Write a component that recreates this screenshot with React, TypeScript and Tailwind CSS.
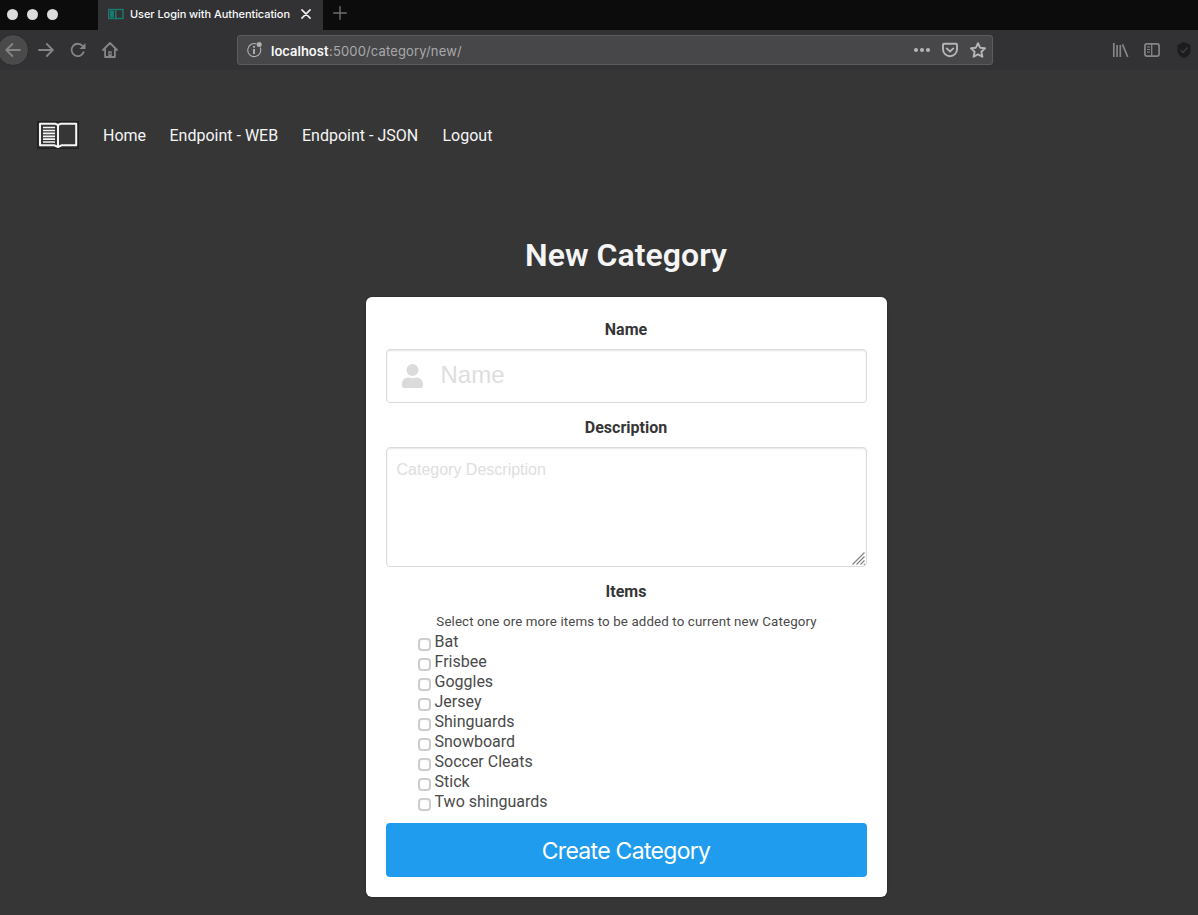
import React from "react";

const items = ["Bat", "Frisbee", "Goggles", "Jersey", "Shinguards", "Snowboard", "Soccer Cleats", "Stick", "Two shinguards"];

function TabStrip() {
  return (
    <div className="flex h-[30px] bg-[#0c0c0d]">
      <div className="flex w-[98px] items-start gap-[9px] pl-[6.5px] pt-[8.5px]">
        <span className="size-[11px] rounded-full bg-[#dcdcdc]" />
        <span className="size-[11px] rounded-full bg-[#dcdcdc]" />
        <span className="size-[11px] rounded-full bg-[#dcdcdc]" />
      </div>
      <div className="flex w-[225px] items-center bg-[#323234] pb-[2px] pl-[10px]">
        <svg width="16" height="12" viewBox="0 0 16 12" fill="none">
          <rect x="0.7" y="1.5" width="14.3" height="9" stroke="#187a6f" strokeWidth="1.4" />
          <path d="M2 2.5h4v7H2z" fill="#1f786e" />
          <path d="M7.8 1v10.500" stroke="#187a6f" strokeWidth="1.5" />
        </svg>
        <span className="ml-[6px] w-[160px] whitespace-nowrap text-[11px] font-medium tracking-[-0.06px] text-[#f9f9fa]">
          User Login with Authentication
        </span>
        <svg className="ml-[11px]" width="10" height="10" viewBox="0 0 10 10" stroke="#f2f2f3" strokeWidth="1.5" strokeLinecap="round">
          <path d="M.9.9l8.2 8.2M9.1.9L.9 9.1" />
        </svg>
      </div>
      <svg className="ml-[10px] mt-[6px]" width="14" height="14" viewBox="0 0 14 14" stroke="#6e6e6f" strokeWidth="1.4" strokeLinecap="round">
        <path d="M7 .7v12.6M.7 7h12.6" />
      </svg>
    </div>
  );
}

function Toolbar() {
  return (
    <div className="flex h-10 items-center bg-[#323234]">
      <div className="-ml-[3px] flex size-8 shrink-0 items-center justify-center rounded-full border border-[#2a2a2c] bg-[#4a4a4b]">
        <svg width="16" height="16" viewBox="0 0 16 16" fill="none" stroke="#848485" strokeWidth="1.8" strokeLinecap="round" strokeLinejoin="round">
          <path d="M15 8H1.5M7.4 2L1.3 8l6.1 6" />
        </svg>
      </div>
      <svg className="ml-[9px] shrink-0" width="16" height="16" viewBox="0 0 16 16" fill="none" stroke="#858587" strokeWidth="1.8" strokeLinecap="round" strokeLinejoin="round">
        <path d="M1 8h13.5M8.8 2l6 6-6 6" />
      </svg>
      <svg className="ml-4 shrink-0" width="16" height="16" viewBox="0 0 16 16" fill="none" stroke="#858587" strokeWidth="1.8" strokeLinecap="round">
        <path d="M13.6 10.2A6.2 6.2 0 1 1 12.6 4" />
        <path d="M15.5 1v6h-6z" fill="#858587" stroke="none" />
      </svg>
      <svg className="ml-4 shrink-0" width="16" height="16" viewBox="0 0 16 16" fill="none" stroke="#858587" strokeWidth="1.8" strokeLinecap="round" strokeLinejoin="round">
        <path d="M1 8l7-7 7 7M3.1 7v8h9.8V7" />
        <path d="M6.3 15V9.2h3.4V15z" fill="#858587" stroke="none" />
        <path d="M8.2 11.3v.4" stroke="#323234" strokeWidth="1.3" />
      </svg>
      <div className="ml-[119px] flex h-[30px] w-[756px] shrink-0 items-center rounded-[3px] border border-[#5c5c5e] bg-[#474749] pl-[8px] pr-[6px]">
        <svg width="17" height="18" viewBox="0 0 17 18" fill="none" stroke="#b1b1b3" strokeWidth="1.1">
          <path d="M14.2 6.5A6.5 6.5 0 1 1 10.5 3" />
          <path d="M8 8v5" strokeWidth="1.9" />
          <circle cx="8" cy="5.8" r="1.1" fill="#b1b1b3" stroke="none" />
          <circle cx="13.2" cy="3.5" r="2.5" fill="#b1b1b3" stroke="none" />
        </svg>
        <span className="ml-[8px] flex whitespace-nowrap pt-[2px] text-[13px] leading-[18px] text-[#a9a9ab]">
          <span className="w-[58px] font-semibold tracking-[0px] text-[#f9f9fa]">localhost</span>
          <span className="tracking-[0.15px]">:5000/category/new/</span>
        </span>
        <svg className="ml-auto" width="16" height="16" viewBox="0 0 16 16" fill="#b5b5b7">
          <circle cx="2" cy="8" r="2" /><circle cx="8" cy="8" r="2" /><circle cx="14" cy="8" r="2" />
        </svg>
        <svg className="ml-3" width="16" height="16" viewBox="0 0 16 16" fill="none" stroke="#b5b5b7" strokeWidth="1.9" strokeLinecap="round" strokeLinejoin="round">
          <path d="M2 1.7h12a1 1 0 0 1 1 1v4.5a7 7 0 0 1-14 0V2.7a1 1 0 0 1 1-1z" />
          <path d="M4.7 6.4L8 9.5l3.3-3.1" />
        </svg>
        <svg className="ml-3" width="16" height="16" viewBox="0 0 16 16" fill="none" stroke="#b5b5b7" strokeWidth="1.9" strokeLinejoin="round">
          <path d="M8 1.2l2.1 4.5 4.9.6-3.6 3.4 1 5L8 12.3l-4.4 2.4 1-5L1 6.300l4.900-.6z" />
        </svg>
      </div>
      <svg className="ml-[119px] shrink-0" width="17" height="16" viewBox="0 0 17 16" fill="none" stroke="#858587" strokeWidth="1.7">
        <path d="M1.8 1v14M5.1 3v12M8.3 3v12M10.5 2.300l5.200 12.500" />
      </svg>
      <svg className="ml-[15px] shrink-0" width="16" height="16" viewBox="0 0 16 16" fill="none" stroke="#858587" strokeWidth="1.7">
        <rect x=".9" y="1.9" width="14.2" height="12.2" rx="2" />
        <path d="M7.7 2v12" strokeWidth="1.3" />
        <path d="M3 5h3M3 7.5h3M3 10h3" strokeWidth="1.2" />
      </svg>
      <svg className="ml-4 shrink-0" width="16" height="16" viewBox="0 0 16 16" fill="none">
        <path d="M8 0l6.5 3v6c0 3.200-3 5.500-6.500 7-3.500-1.500-6.500-3.800-6.500-7V3z" fill="#1c1c1d" />
        <path d="M4.800 8.200l2.200 2.200 4.500-4.800" stroke="#3e3e40" strokeWidth="1.400" />
      </svg>
    </div>
  );
}

function SiteNav() {
  return (
    <nav className="flex h-[28px] items-center pl-[37px] text-[16px] leading-6 text-[#f5f5f5]">
      <svg className="mr-[24px] shrink-0" width="42" height="28" viewBox="0 0 42 28" fill="none">
        <rect x=".5" y=".5" width="41" height="27" fill="#2c2c2c" stroke="#202020" />
        <path d="M3 2.800h15.500l2.500 1.200 2.500-1.200H39.200v21.500H24.500L21 26l-3.500-1.700H3z" fill="#363636" stroke="#f5f5f5" strokeWidth="2" strokeLinejoin="round" />
        <path d="M21 3.500v22" stroke="#f5f5f5" strokeWidth="2" />
        <path d="M6 6.500h12M6 9.500h12M6 12.400h12M6 15.300h12M6 18.200h12M6 21h12" stroke="#f5f5f5" strokeWidth="1.700" />
      </svg>
      <a className="w-[66.5px] whitespace-nowrap pt-[2px]">Home</a>
      <a className="w-[132.5px] whitespace-nowrap pt-[2px]">Endpoint - WEB</a>
      <a className="w-[140.5px] whitespace-nowrap pt-[2px]">Endpoint - JSON</a>
      <a className="pt-[2px]">Logout</a>
    </nav>
  );
}

export default function App() {
  return (
    <div className="flex h-[915px] w-[1198px] flex-col overflow-hidden bg-[#363636] font-['Inter',sans-serif]">
      <TabStrip />
      <Toolbar />
      <main className="flex flex-col pt-[51px] font-['Roboto',sans-serif]">
        <SiteNav />
        <div className="ml-[366px] w-[521px] pt-[88px]">
          <h1 className="pr-px text-center text-[32px] font-semibold leading-9 tracking-[0.05px] text-[#f5f5f5]">New Category</h1>
          <form className="mt-6 flex h-[600px] flex-col rounded-[6px] bg-white px-5 pt-5 text-[#4a4a4a] shadow-[0_2px_3px_rgba(10,10,10,0.1),0_0_0_1px_rgba(10,10,10,0.1)]">
            <label className="h-6 pr-px pt-px text-center text-[16px] font-bold leading-6 text-[#363636]">Name</label>
            <div className="mt-2 flex h-[54px] items-center rounded-[4px] border border-[#dbdbdb] pl-[15px] shadow-[inset_0_1px_2px_rgba(10,10,10,0.1)]">
              <svg width="21" height="24" viewBox="0 0 21 24" fill="#dbdbdb">
                <circle cx="10.5" cy="6" r="6" />
                <path d="M6.3 13.5h.8c2.1 1 4.700 1 6.800 0h.8c3.500 0 6.300 2.800 6.300 6.300v1.900c0 1.300-1 2.300-2.300 2.300H2.300C1 24 0 23 0 21.700v-1.900c0-3.500 2.800-6.300 6.300-6.300z" />
              </svg>
              <input className="ml-[17.5px] w-[400px] bg-transparent pb-[3px] font-['Liberation_Sans',sans-serif] text-[24px] leading-9 outline-none placeholder:text-[#dedede]" placeholder="Name" />
            </div>
            <label className="mt-3 h-6 pr-px pt-px text-center text-[16px] font-bold leading-6 text-[#363636]">Description</label>
            <div className="relative mt-2 h-[120px] shrink-0">
              <textarea
                className="block size-full resize-none rounded-[4px] border border-[#dbdbdb] px-[9.5px] py-[10px] font-['Liberation_Sans',sans-serif] text-[16px] leading-6 shadow-[inset_0_1px_2px_rgba(10,10,10,0.1)] outline-none placeholder:text-[#dedede]"
                placeholder="Category Description"
              />
              <svg className="absolute bottom-[2px] right-[2px]" width="13" height="13" viewBox="0 0 13 13" stroke="#808080" strokeWidth="1.1">
                <path d="M.5 12.500L12.500 .5M4.500 12.500L12.500 4.500M8.500 12.500L12.500 8.500M11.800 13l1-1" />
              </svg>
            </div>
            <label className="mt-3 h-6 pr-px pt-px text-center text-[16px] font-bold leading-6 text-[#363636]">Items</label>
            <p className="mt-2 h-5 whitespace-nowrap pt-px text-center text-[13.33px] leading-5 tracking-[0.12px] text-[#4a4a4a]">Select one ore more items to be added to current new Category</p>
            <div className="ml-8 flex flex-col">
              {items.map((item) => (
                <label key={item} className="flex h-5 items-center text-[16px] leading-5">
                  <input type="checkbox" className="mr-[3.5px] mt-[6px] size-[13px] appearance-none rounded-[4px] border-2 border-[#cdcdcd] bg-white" />
                  <span className="pt-[2px]">{item}</span>
                </label>
              ))}
            </div>
            <button type="button" className="mt-3 h-[54px] w-full rounded-[4px] bg-[#209cee] pr-px pt-[2px] font-['Inter',sans-serif] text-[23px] tracking-[-0.7px] text-white">
              Create Category
            </button>
          </form>
        </div>
      </main>
    </div>
  );
}
